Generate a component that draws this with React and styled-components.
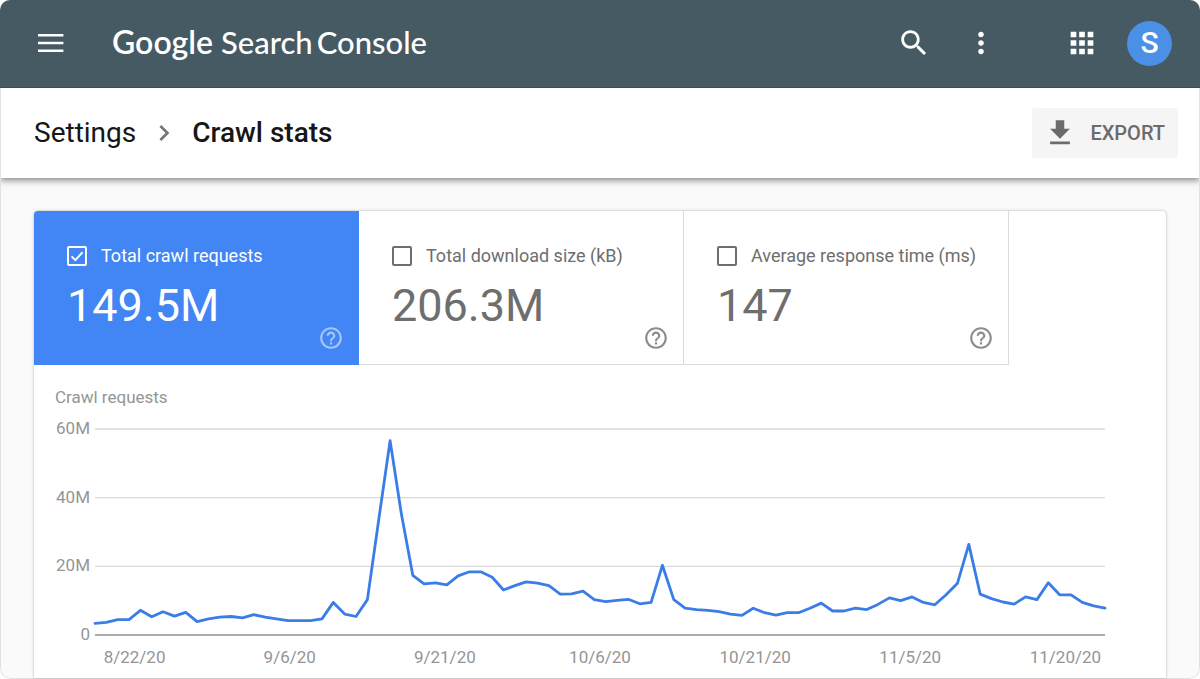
import React, { useState } from "react";
import styled, { createGlobalStyle } from "styled-components";

const GlobalStyle = createGlobalStyle`
  *, *::before, *::after { box-sizing: border-box; }
  body {
    margin: 0;
    background: #fff;
    font-family: Roboto, "Liberation Sans", sans-serif;
    color: #212121;
  }
  button { font-family: inherit; }
`;

const Frame = styled.div`
  display: flex;
  flex-direction: column;
  min-height: 100vh;
  border-radius: 10px;
  overflow: hidden;
`;

const AppBar = styled.header`
  display: flex;
  align-items: center;
  height: 88px;
  padding: 0 28px 1px 26px;
  background: #455a63;
  border-bottom: 1px solid #3a4e57;
  color: #fff;
`;

const IconButton = styled.button`
  display: flex;
  align-items: center;
  justify-content: center;
  width: ${(p) => p.$size}px;
  height: ${(p) => p.$size}px;
  padding: 0;
  border: 0;
  background: none;
  color: inherit;
  cursor: pointer;
`;

const Logo = styled.a`
  display: flex;
  align-items: baseline;
  gap: 4px;
  margin: 0 auto 0 36px;
  padding-bottom: 2px;
  color: #fff;
  font-family: Lato, sans-serif;
  font-size: 31px;
  font-weight: 500;
  line-height: 40px;
  text-decoration: none;
  white-space: nowrap;
`;

const LogoBrand = styled.span`
  margin-right: 4px;
  font-size: 32px;
  font-weight: 600;
`;

const BarGroup = styled.div`
  display: flex;
  align-items: center;
  gap: 23px;
  margin-left: ${(p) => (p.$apart ? 57 : 0)}px;
`;

const Avatar = styled.button`
  width: 45px;
  height: 45px;
  padding: 0;
  border: 0;
  border-radius: 50%;
  background: #4a90e6;
  color: #fff;
  font-size: 30px;
  font-weight: 500;
  line-height: 44px;
  text-align: center;
  cursor: pointer;
`;

const Body = styled.div`
  display: flex;
  flex: 1;
  flex-direction: column;
  border: 1px solid #e2e2e2;
  border-top: 0;
  border-radius: 0 0 10px 10px;
  background: #fafafa;
`;

const TitleBar = styled.div`
  display: flex;
  align-items: center;
  justify-content: space-between;
  height: 90px;
  padding: 0 21px 0 33px;
  background: #fff;
  box-shadow: 0 1px 7px 1px rgba(0, 0, 0, 0.5);
  clip-path: inset(0 0 -16px 0);
`;

const Breadcrumb = styled.nav`
  display: flex;
  align-items: center;
  gap: 12px;
  font-size: 28px;
  line-height: 36px;
  white-space: nowrap;
  color: #757575;
`;

const CrumbLink = styled.a`
  color: #161616;
  text-decoration: none;
`;

const CrumbTitle = styled.h1`
  margin: 0;
  color: #161616;
  font-size: inherit;
  font-weight: 500;
`;

const ExportButton = styled.button`
  display: flex;
  align-items: center;
  gap: 13px;
  height: 50px;
  padding: 0 13px 0 11px;
  border: 0;
  border-radius: 3px;
  background: #f5f5f5;
  color: #6b6b6b;
  font-size: 20px;
  font-weight: 500;
  cursor: pointer;
`;

const Main = styled.main`
  display: flex;
  flex: 1;
  padding: 33px 33px 0;
`;

const Card = styled.section`
  flex: 1;
  min-width: 0;
  border-radius: 4px 4px 0 0;
  background: #fff;
  box-shadow: 0 0 3px rgba(0, 0, 0, 0.3);
`;

const Tiles = styled.div`
  display: flex;
`;

const Tile = styled.div`
  flex: 0 1 325px;
  padding: 33px 14px 13px 33px;
  border: solid ${(p) => (p.$on ? "#4285f4" : "#dadada")};
  border-width: 0 1px 1px 0;
  border-top-left-radius: ${(p) => (p.$on ? 4 : 0)}px;
  background: ${(p) => (p.$on ? "#4285f4" : "#fff")};
  color: ${(p) => (p.$on ? "#fff" : "#6e6e6e")};
`;

const TileLabel = styled.label`
  display: flex;
  align-items: center;
  gap: 14px;
  font-size: 18px;
  line-height: 24px;
  white-space: nowrap;
  cursor: pointer;
`;

const CheckWrap = styled.span`
  position: relative;
  display: flex;
`;

const Check = styled.input`
  appearance: none;
  width: 20px;
  height: 20px;
  margin: 0;
  border: 2px solid currentColor;
  border-radius: 2px;
  color: inherit;
  cursor: pointer;
`;

const CheckMark = styled.svg`
  position: absolute;
  inset: 0;
  pointer-events: none;
`;

const TileFoot = styled.div`
  display: flex;
  align-items: flex-end;
  justify-content: space-between;
  height: 71px;
  margin-top: 12px;
  color: ${(p) => (p.$on ? "#a6c6fb" : "#8c8c8c")};
`;

const TileValue = styled.strong`
  align-self: flex-start;
  color: ${(p) => (p.$on ? "#fff" : "#6e6e6e")};
  font-size: 45px;
  font-weight: 400;
  line-height: 52px;
`;

const ChartPanel = styled.figure`
  margin: 0;
  padding: 20px 0 11px;
  color: #959595;
  font-size: 17px;
  line-height: 20px;
`;

const ChartTitle = styled.figcaption`
  padding: 0 21px;
  line-height: 24px;
`;

const PlotRow = styled.div`
  display: flex;
  gap: 5px;
  margin-top: 9px;
  padding: 0 61px 0 21px;
`;

const YAxis = styled.div`
  display: flex;
  flex: none;
  flex-direction: column;
  justify-content: space-between;
  width: 35px;
  height: 226px;
  text-align: right;
`;

const Plot = styled.svg`
  flex: 1;
  min-width: 0;
  height: 206px;
  margin: 11px 0 9px;
  overflow: visible;
`;

const XAxis = styled.div`
  display: grid;
  grid-template-columns: repeat(7, 1fr);
  margin-top: 3px;
  padding: 0 23px;
  text-align: center;
`;

const paths = {
  search:
    "M15.5 14h-.79l-.28-.27C15.41 12.59 16 11.11 16 9.5 16 5.91 13.09 3 9.5 3S3 5.91 3 9.5 5.91 16 9.5 16c1.61 0 3.09-.59 4.23-1.57l.27.28v.79l5 4.99L20.49 19l-4.99-5zm-6 0C7.01 14 5 11.99 5 9.5S7.01 5 9.5 5 14 7.01 14 9.5 11.99 14 9.5 14z",
  more: "M12 8c1.1 0 2-.9 2-2s-.9-2-2-2-2 .9-2 2 .9 2 2 2zm0 2c-1.1 0-2 .9-2 2s.9 2 2 2 2-.9 2-2-.9-2-2-2zm0 6c-1.1 0-2 .9-2 2s.9 2 2 2 2-.9 2-2-.9-2-2-2z",
  apps: "M4 8h4V4H4v4zm6 12h4v-4h-4v4zm-6 0h4v-4H4v4zm0-6h4v-4H4v4zm6 0h4v-4h-4v4zm6-10v4h4V4h-4zm-6 4h4V4h-4v4zm6 6h4v-4h-4v4zm0 6h4v-4h-4v4z",
  chevron: "M10 6 8.59 7.41 13.17 12l-4.58 4.59L10 18l6-6z",
  download: "M19 9h-4V3H9v6H5l7 7 7-7zM5 18v2h14v-2H5z",
  help: "M11 18h2v-2h-2v2zm1-16C6.48 2 2 6.48 2 12s4.48 10 10 10 10-4.48 10-10S17.52 2 12 2zm0 18c-4.41 0-8-3.59-8-8s3.59-8 8-8 8 3.59 8 8-3.59 8-8 8zm0-14c-2.21 0-4 1.79-4 4h2c0-1.1.9-2 2-2s2 .9 2 2c0 2-3 1.75-3 5h2c0-2.25 3-2.5 3-5 0-2.21-1.79-4-4-4z",
};

const Icon = ({ name, size = 34 }) => (
  <svg width={size} height={size} viewBox="0 0 24 24" fill="currentColor" aria-hidden="true">
    <path d={paths[name]} />
  </svg>
);

const MenuIcon = () => (
  <svg width="26" height="18" viewBox="0 0 26 18" fill="currentColor" aria-hidden="true">
    <path d="M0 0h25.4v2.4H0zM0 7.8h25.4v2.4H0zM0 15.6h25.4V18H0z" />
  </svg>
);

const metrics = [
  { id: "requests", label: "Total crawl requests", value: "149.5M" },
  { id: "size", label: "Total download size (kB)", value: "206.3M" },
  { id: "time", label: "Average response time (ms)", value: "147" },
];

const dates = ["8/22/20", "9/6/20", "9/21/20", "10/6/20", "10/21/20", "11/5/20", "11/20/20"];

// Crawl requests per day, in millions.
const daily = [
  3.4, 3.7, 4.5, 4.5, 7.2, 5.3, 6.8, 5.5, 6.6, 3.9, 4.7, 5.2, 5.4, 5.0, 5.9,
  5.2, 4.7, 4.2, 4.2, 4.2, 4.7, 9.5, 6.1, 5.4, 10.3, 33.5, 56.6, 35.2, 17.4,
  14.9, 15.2, 14.6, 17.2, 18.4, 18.4, 16.8, 13.1, 14.4, 15.5, 15.1, 14.4,
  11.9, 12.0, 12.8, 10.3, 9.7, 10.1, 10.4, 9.1, 9.5, 20.3, 10.3, 7.8, 7.4,
  7.2, 6.8, 6.1, 5.7, 7.8, 6.5, 5.8, 6.5, 6.5, 7.8, 9.3, 7.0, 7.0, 7.8, 7.4,
  8.9, 10.8, 10.0, 11.1, 9.5, 8.8, 11.7, 15.1, 26.4, 11.9, 10.6, 9.6, 9.0,
  11.1, 10.3, 15.2, 11.7, 11.7, 9.5, 8.5, 7.8,
];

const PLOT_W = 1010;
const PLOT_H = 206;
const yOf = (millions) => PLOT_H - (millions / 60) * PLOT_H;
const linePoints = daily
  .map((v, i) => `${((i * PLOT_W) / (daily.length - 1)).toFixed(1)},${yOf(v).toFixed(1)}`)
  .join(" ");

function MetricTile({ metric, checked, onToggle }) {
  return (
    <Tile $on={checked}>
      <TileLabel htmlFor={metric.id}>
        <CheckWrap>
          <Check id={metric.id} type="checkbox" checked={checked} onChange={onToggle} />
          {checked && (
            <CheckMark width="20" height="20" viewBox="0 0 20 20" fill="none" aria-hidden="true">
              <path d="M4.6 10.4 8.3 14.1 15.6 6.3" stroke="currentColor" strokeWidth="2" />
            </CheckMark>
          )}
        </CheckWrap>
        {metric.label}
      </TileLabel>
      <TileFoot $on={checked}>
        <TileValue $on={checked}>{metric.value}</TileValue>
        <IconButton $size={26} aria-label={`About ${metric.label}`}>
          <Icon name="help" size={26} />
        </IconButton>
      </TileFoot>
    </Tile>
  );
}

export default function App() {
  const [shown, setShown] = useState({ requests: true });
  const toggle = (id) => setShown((s) => ({ ...s, [id]: !s[id] }));

  return (
    <>
      <GlobalStyle />
      <Frame>
        <AppBar>
          <IconButton $size={50} aria-label="Menu">
            <MenuIcon />
          </IconButton>
          <Logo href="#">
            <LogoBrand>Google</LogoBrand>
            <span>Search</span>
            <span>Console</span>
          </Logo>
          <BarGroup>
            <IconButton $size={44} aria-label="Search">
              <Icon name="search" />
            </IconButton>
            <IconButton $size={44} aria-label="More options">
              <Icon name="more" />
            </IconButton>
          </BarGroup>
          <BarGroup $apart>
            <IconButton $size={44} aria-label="Apps">
              <Icon name="apps" />
            </IconButton>
            <Avatar aria-label="Account">S</Avatar>
          </BarGroup>
        </AppBar>
        <Body>
          <TitleBar>
            <Breadcrumb aria-label="Breadcrumb">
              <CrumbLink href="#">Settings</CrumbLink>
              <Icon name="chevron" size={32} />
              <CrumbTitle>Crawl stats</CrumbTitle>
            </Breadcrumb>
            <ExportButton>
              <Icon name="download" />
              EXPORT
            </ExportButton>
          </TitleBar>
          <Main>
            <Card>
              <Tiles>
                {metrics.map((m) => (
                  <MetricTile
                    key={m.id}
                    metric={m}
                    checked={!!shown[m.id]}
                    onToggle={() => toggle(m.id)}
                  />
                ))}
              </Tiles>
              <ChartPanel>
                <ChartTitle>Crawl requests</ChartTitle>
                <PlotRow>
                  <YAxis>
                    <span>60M</span>
                    <span>40M</span>
                    <span>20M</span>
                    <span>0</span>
                  </YAxis>
                  <Plot
                    viewBox={`0 0 ${PLOT_W} ${PLOT_H}`}
                    preserveAspectRatio="none"
                    role="img"
                    aria-label="Crawl requests per day"
                  >
                    {[60, 40, 20, 0].map((v) => (
                      <line
                        key={v}
                        x1="0"
                        x2={PLOT_W}
                        y1={yOf(v)}
                        y2={yOf(v)}
                        stroke={v ? "#dadada" : "#8f8f8f"}
                        strokeWidth="1.4"
                        vectorEffect="non-scaling-stroke"
                      />
                    ))}
                    <polyline
                      points={linePoints}
                      fill="none"
                      stroke="#3b7de6"
                      strokeWidth="2.8"
                      strokeLinejoin="round"
                      strokeLinecap="round"
                      vectorEffect="non-scaling-stroke"
                    />
                  </Plot>
                </PlotRow>
                <XAxis>
                  {dates.map((d) => (
                    <span key={d}>{d}</span>
                  ))}
                </XAxis>
              </ChartPanel>
            </Card>
          </Main>
        </Body>
      </Frame>
    </>
  );
}
